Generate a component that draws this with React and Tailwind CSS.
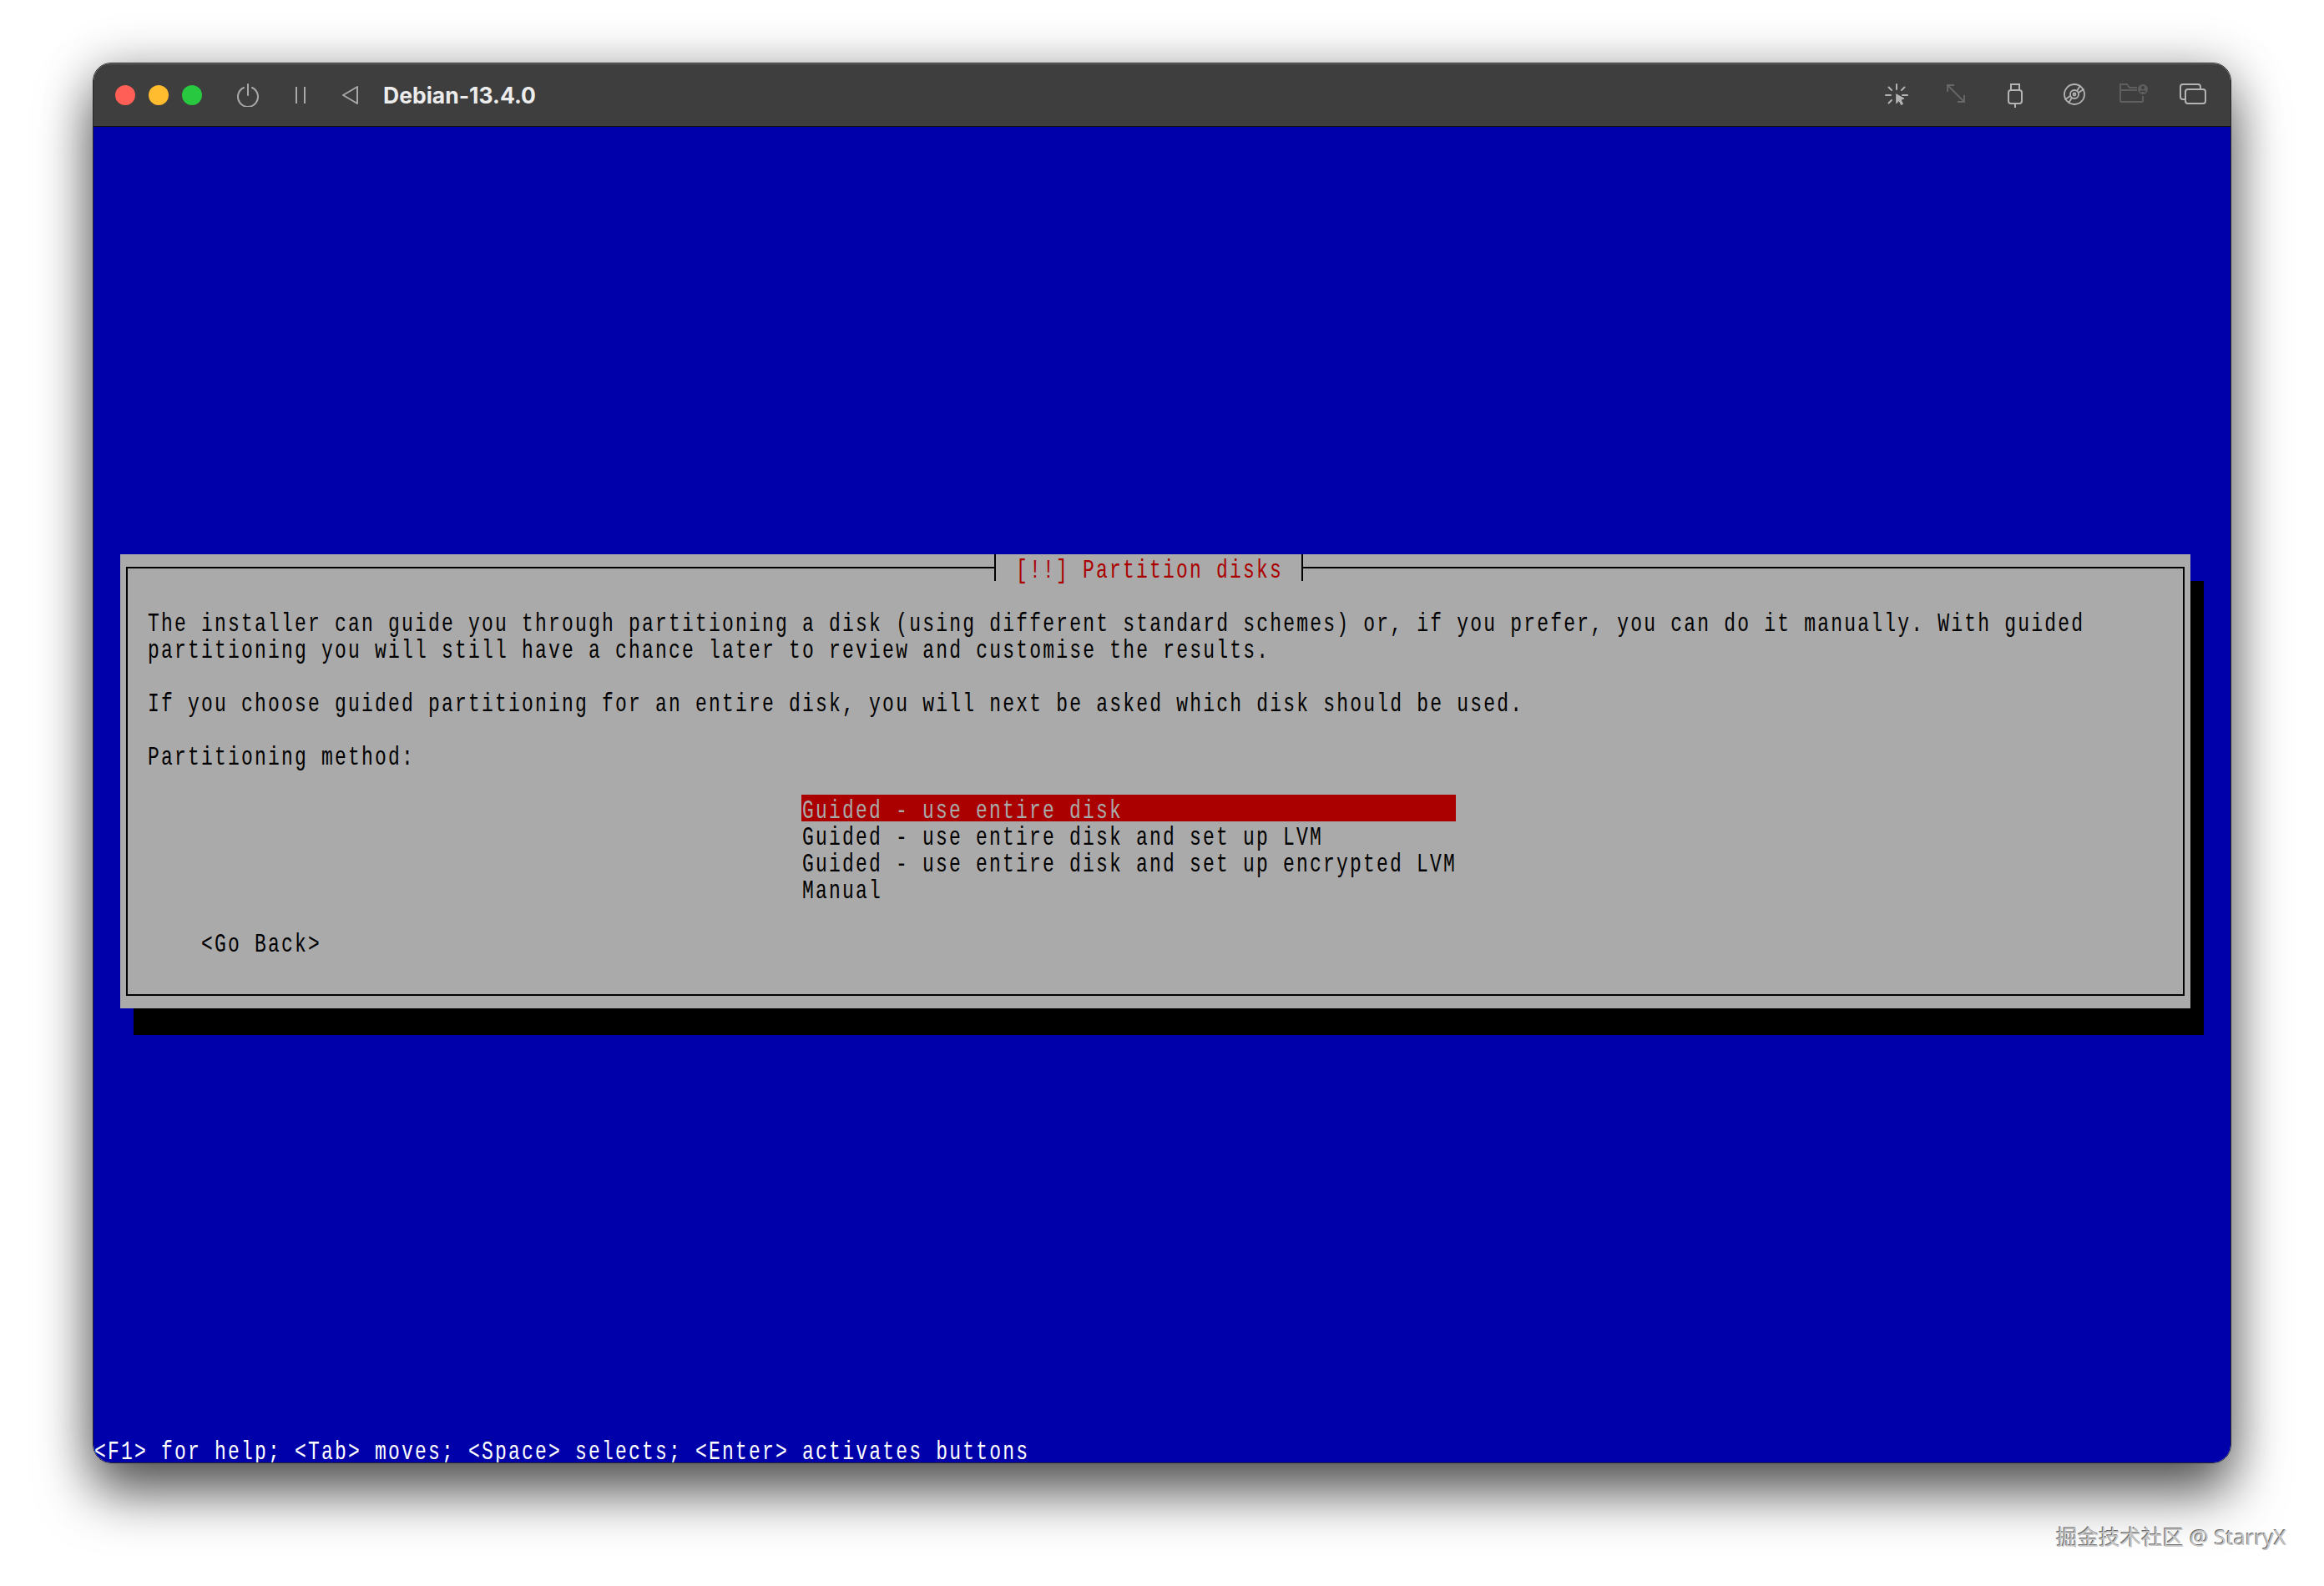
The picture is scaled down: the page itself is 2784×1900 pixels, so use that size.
import React from "react";

const Line = ({ children, className = "" }) => (
  <div className={`h-8 leading-8 whitespace-pre ${className}`}>
    <span className="inline-block leading-[18px] translate-x-[1px] translate-y-[4px] scale-y-[1.38]">{children || " "}</span>
  </div>
);

const PowerIcon = () => (
  <svg width="26" height="28" viewBox="0 0 26 28" fill="none" stroke="#a8a8a8" strokeWidth="2" strokeLinecap="round" className="ml-[42px]">
    <path d="M8 5A12 12 0 1 0 18 5" />
    <path d="M13 1v13" />
  </svg>
);

const PauseIcon = () => (
  <svg width="12" height="20" viewBox="0 0 12 20" fill="none" stroke="#a8a8a8" strokeWidth="2" className="ml-[44px]">
    <path d="M1 0v20M11 0v20" />
  </svg>
);

const BackIcon = () => (
  <svg width="20" height="22" viewBox="0 0 20 22" fill="none" stroke="#a8a8a8" strokeWidth="2" strokeLinejoin="round" className="ml-[43px]">
    <path d="M19 1 2 11l17 10z" />
  </svg>
);

const CursorIcon = () => (
  <svg width="28" height="28" viewBox="0 0 28 28" fill="none" stroke="#b4b4b4" strokeWidth="2" strokeLinecap="round">
    <path d="M14 1v6M1 14h6M21 14h6M4.500 4.500l3.500 3.500M23.500 4.500l-3.500 3.500M4.500 23.500l3.500-3.500" />
    <path d="M14 13l9 5-4 1.500 2.500 5-2 1-2.500-5-3 3z" fill="#b4b4b4" strokeWidth="1" strokeLinejoin="round" />
  </svg>
);

const ExpandIcon = () => (
  <svg width="24" height="24" viewBox="0 0 24 24" fill="none" stroke="#666" strokeWidth="2">
    <path d="M2 2l20 20M2 10V2h8M22 14v8h-8" />
  </svg>
);

const UsbIcon = () => (
  <svg width="18" height="29" viewBox="0 0 18 29" fill="none" stroke="#b4b4b4" strokeWidth="2">
    <path d="M4 8V1h10v7" />
    <rect x="1" y="8" width="16" height="16" rx="3" />
    <path d="M9 24v5" />
  </svg>
);

const DiscIcon = () => (
  <svg width="26" height="26" viewBox="0 0 26 26" fill="none" stroke="#b4b4b4" strokeWidth="1.800">
    <circle cx="13" cy="13" r="12" />
    <circle cx="13" cy="13" r="5" />
    <circle cx="13" cy="13" r="1.500" />
    <path d="M16 9l4-6.500M18 11l6.500-4.500M10 17l-4 6.500M8 15l-6.500 4.500" />
  </svg>
);

const FolderIcon = () => (
  <svg width="34" height="23" viewBox="0 0 34 23" fill="none" stroke="#5f5f5f" strokeWidth="2">
    <path d="M21 5H12L9 1H1v20a1 1 0 0 0 1 1h25a1 1 0 0 0 1-1v-6" />
    <path d="M1 8h20" />
    <circle cx="28" cy="7" r="6" fill="#5f5f5f" stroke="none" />
    <circle cx="28" cy="5" r="2" fill="#3e3e3e" stroke="none" />
    <path d="M24.500 10.500a4 3 0 0 1 7 0" stroke="#3e3e3e" strokeWidth="1.500" />
  </svg>
);

const WindowsIcon = () => (
  <svg width="32" height="25" viewBox="0 0 32 25" fill="none" stroke="#b4b4b4" strokeWidth="2">
    <path d="M7 19H4a3 3 0 0 1-3-3V4a3 3 0 0 1 3-3h18a3 3 0 0 1 3 3v3" />
    <rect x="7" y="7" width="24" height="17" rx="3" />
  </svg>
);

const toolbarIcons = [CursorIcon, ExpandIcon, UsbIcon, DiscIcon, FolderIcon, WindowsIcon];

const App = () => {
  return (
    <div className="w-[2784px] h-[1900px] bg-white overflow-hidden pl-[111px] pt-[75px] font-['Liberation_Mono',monospace] text-[23px] tracking-[2.2px]">
      <div className="w-[2562px] h-[1678px] rounded-[22px] border border-[#262626] flex flex-col overflow-hidden shadow-[0_36px_64px_rgba(0,0,0,0.62),0_0_60px_rgba(0,0,0,0.22)]">
        <div className="h-[76px] shrink-0 bg-[#3e3e3e] border-t border-[#707070] border-b border-b-[#111] flex items-center pl-[26px] pr-[10px]">
          <div className="flex gap-4">
            <div className="w-6 h-6 rounded-full bg-[#ff5f57]" />
            <div className="w-6 h-6 rounded-full bg-[#febc2e]" />
            <div className="w-6 h-6 rounded-full bg-[#28c840]" />
          </div>
          <PowerIcon />
          <PauseIcon />
          <BackIcon />
          <span className="ml-[30px] pt-[2px] text-[26.500px] tracking-normal font-bold text-[#ececec] font-['Inter',sans-serif]">Debian-13.4.0</span>
          <div className="ml-auto flex">
            {toolbarIcons.map((Icon, i) => (
              <div key={i} className="w-[71px] flex justify-center">
                <Icon />
              </div>
            ))}
          </div>
        </div>

        <div className="flex-1 bg-[#0000aa] flex flex-col">
          <div className="flex-1 pt-[512px] pl-8">
            <div className="relative w-[2480px] h-[544px] bg-[#aaaaaa] text-black shadow-[16px_32px_0_#000] pt-[15px] pl-[7px] pr-[7px] pb-[15px]">
              <div className="h-full border-2 border-black pt-[47px] pl-[23px]">
                <Line>The installer can guide you through partitioning a disk (using different standard schemes) or, if you prefer, you can do it manually. With guided</Line>
                <Line>partitioning you will still have a chance later to review and customise the results.</Line>
                <Line />
                <Line>If you choose guided partitioning for an entire disk, you will next be asked which disk should be used.</Line>
                <Line />
                <Line>Partitioning method:</Line>
                <Line />
                <div className="ml-[784px] w-[784px]">
                  <Line className="bg-[#aa0000] text-[#aaaaaa]">Guided - use entire disk</Line>
                  <Line>Guided - use entire disk and set up LVM</Line>
                  <Line>Guided - use entire disk and set up encrypted LVM</Line>
                  <Line>Manual</Line>
                </div>
                <Line />
                <Line className="ml-16">&lt;Go Back&gt;</Line>
              </div>
              <div className="absolute left-[1047px] top-0 w-[370px] h-8 bg-[#aaaaaa] border-x-2 border-black flex justify-center text-[#aa0000]">
                <Line>[!!] Partition disks</Line>
              </div>
            </div>
          </div>
          <Line className="text-white">&lt;F1&gt; for help; &lt;Tab&gt; moves; &lt;Space&gt; selects; &lt;Enter&gt; activates buttons</Line>
        </div>
      </div>
      <div className="w-[2628px] mt-[72px] flex justify-end text-[25.500px] leading-8 tracking-normal text-[#c4c4c4] font-['Noto_Sans','Noto_Sans_CJK_SC',sans-serif] [text-shadow:-1px_-1px_0_#666]">
        掘金技术社区 @ StarryX
      </div>
    </div>
  );
};

export default App;
